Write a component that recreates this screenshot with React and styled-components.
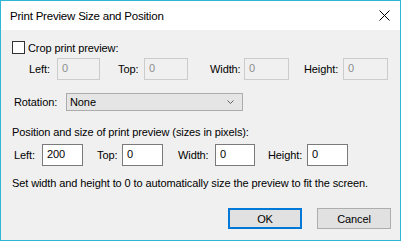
import React from 'react';
import styled, { createGlobalStyle } from 'styled-components';

const Global = createGlobalStyle`
  html, body { margin: 0; padding: 0; background: #f0f0f0; }
  * { box-sizing: border-box; }
`;

const Window = styled.div`
  width: 401px;
  height: 241px;
  border: 1px solid #2fb6d5;
  background: #f0f0f0;
  font-family: "Liberation Sans", Arial, sans-serif;
  font-size: 11px;
  letter-spacing: -0.1px;
  color: #000;
  display: flex;
  flex-direction: column;
  overflow: hidden;
`;

const TitleBar = styled.div`
  height: 29px;
  flex: none;
  background: #fff;
  display: flex;
  align-items: center;
  justify-content: space-between;
  padding: 0 10px 0 9px;
  font-size: 11.5px;
  letter-spacing: -0.2px;
`;

const Body = styled.div`
  flex: 1;
  padding: 11px 0 0 0;
  display: flex;
  flex-direction: column;
`;

const Row = styled.div`
  display: flex;
  align-items: center;
  padding-left: ${p => p.$indent}px;
  margin-top: ${p => p.$top || 0}px;
`;

const Check = styled.span`
  width: 13px;
  height: 13px;
  border: 1px solid #333;
  background: #fff;
  margin-right: 3px;
`;

const Label = styled.span`
  width: ${p => p.$w}px;
  margin-left: ${p => p.$gap || 0}px;
  flex: none;
  white-space: nowrap;
`;

const TextBox = styled.div`
  width: ${p => p.$w}px;
  height: 22px;
  flex: none;
  border: 1px solid ${p => (p.$disabled ? '#cccccc' : '#7a7a7a')};
  background: ${p => (p.$disabled ? '#f0f0f0' : '#fff')};
  color: ${p => (p.$disabled ? '#8d8d8d' : '#000')};
  padding: 2px 0 0 4px;
  line-height: 14px;
`;

const Select = styled.div`
  width: 177px;
  height: 18px;
  border: 1px solid #acacac;
  background: #e5e5e5;
  display: flex;
  align-items: center;
  justify-content: space-between;
  padding: 0 8px 0 3px;
`;

const Note = styled.div`
  padding-left: 11px;
  margin-top: ${p => p.$top}px;
`;

const Buttons = styled.div`
  display: flex;
  justify-content: flex-end;
  gap: 15px;
  padding-right: 9px;
  margin-top: 19px;
`;

const Button = styled.div`
  width: 74px;
  height: 21px;
  display: flex;
  align-items: center;
  justify-content: center;
  background: #e1e1e1;
  border: 1px solid ${p => (p.$default ? '#0078d7' : '#adadad')};
  box-shadow: ${p => (p.$default ? 'inset 0 0 0 1px #0078d7' : 'none')};
`;

const fields = (items, disabled) =>
  items.map(([label, lw, gap, iw, value]) => (
    <React.Fragment key={label}>
      <Label $w={lw} $gap={gap}>{label}</Label>
      <TextBox $w={iw} $disabled={disabled}>{value}</TextBox>
    </React.Fragment>
  ));

export default function App() {
  return (
    <Window>
      <Global />
      <TitleBar>
        <span>Print Preview Size and Position</span>
        <svg width="11" height="11" viewBox="0 0 11 11">
          <path d="M0.5 0.5 L10.5 10.5 M10.5 0.5 L0.5 10.5" stroke="#000" strokeWidth="1" />
        </svg>
      </TitleBar>
      <Body>
        <Row $indent={11}>
          <Check />
          <span>Crop print preview:</span>
        </Row>
        <Row $indent={28} $top={4}>
          {fields([
            ['Left:', 28, 0, 43, '0'],
            ['Top:', 26, 18, 44, '0'],
            ['Width:', 34, 22, 45, '0'],
            ['Height:', 39, 15, 45, '0'],
          ], true)}
        </Row>
        <Row $indent={13} $top={13}>
          <Label $w={52}>Rotation:</Label>
          <Select>
            <span>None</span>
            <svg width="7" height="4" viewBox="0 0 7 4">
              <path d="M0.5 0.5 L3.5 3.5 L6.5 0.5" fill="none" stroke="#606060" strokeWidth="1" />
            </svg>
          </Select>
        </Row>
        <Note $top={15}>Position and size of print preview (sizes in pixels):</Note>
        <Row $indent={13} $top={6}>
          {fields([
            ['Left:', 28, 0, 41, '200'],
            ['Top:', 25, 14, 41, '0'],
            ['Width:', 37, 15, 40, '0'],
            ['Height:', 39, 13, 41, '0'],
          ], false)}
        </Row>
        <Note $top={11}>Set width and height to 0 to automatically size the preview to fit the screen.</Note>
        <Buttons>
          <Button $default>OK</Button>
          <Button>Cancel</Button>
        </Buttons>
      </Body>
    </Window>
  );
}
